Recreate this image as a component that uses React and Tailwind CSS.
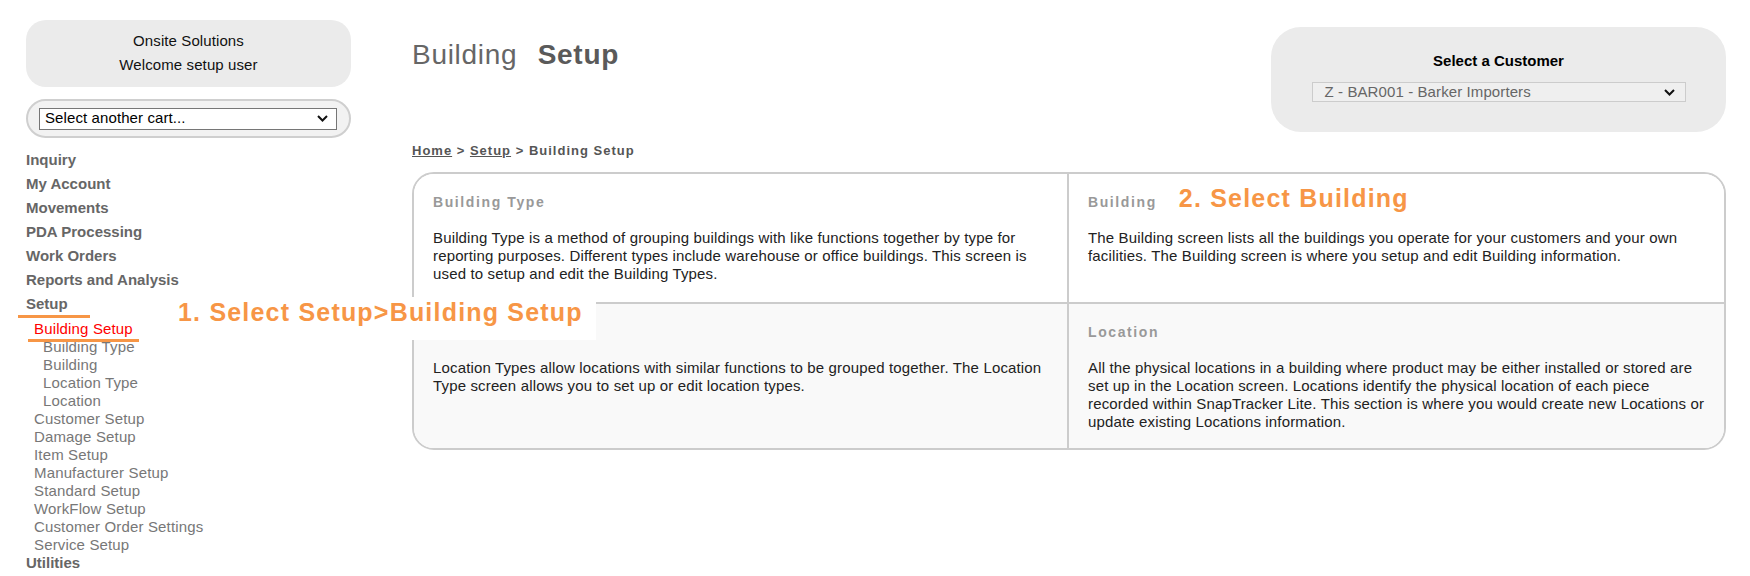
import React from 'react';

const navTop = ['Inquiry', 'My Account', 'Movements', 'PDA Processing', 'Work Orders', 'Reports and Analysis'];
const buildingItems = ['Building Type', 'Building', 'Location Type', 'Location'];
const setupItems = [
  'Customer Setup',
  'Damage Setup',
  'Item Setup',
  'Manufacturer Setup',
  'Standard Setup',
  'WorkFlow Setup',
  'Customer Order Settings',
  'Service Setup',
];

const cards = [
  {
    title: 'Building Type',
    text: 'Building Type is a method of grouping buildings with like functions together by type for reporting purposes. Different types include warehouse or office buildings. This screen is used to setup and edit the Building Types.',
  },
  {
    title: 'Building',
    note: '2. Select Building',
    text: 'The Building screen lists all the buildings you operate for your customers and your own facilities. The Building screen is where you setup and edit Building information.',
  },
  {
    title: 'Location Type',
    text: 'Location Types allow locations with similar functions to be grouped together. The Location Type screen allows you to set up or edit location types.',
  },
  {
    title: 'Location',
    text: 'All the physical locations in a building where product may be either installed or stored are set up in the Location screen. Locations identify the physical location of each piece recorded within SnapTracker Lite. This section is where you would create new Locations or update existing Locations information.',
  },
];

const Chevron = () => (
  <svg width="11" height="7" viewBox="0 0 11 7" className="shrink-0">
    <path d="M1 1l4.5 4.5L10 1" fill="none" stroke="#111" strokeWidth="2" />
  </svg>
);

const Sidebar = () => (
  <div className="w-[412px] shrink-0 pl-[26px] pt-[20px]">
    <div className="w-[325px] h-[67px] rounded-[20px] bg-[#ebebeb] pt-[9px] text-center text-[15px] leading-[24px] tracking-[0.1px] text-[#111]">
      <div>Onsite Solutions</div>
      <div>Welcome setup user</div>
    </div>

    <div className="mt-[12px] w-[325px] h-[39px] rounded-full border-2 border-[#cfcfcf] bg-[#f2f2f2] flex items-center pl-[11px] pr-[12px]">
      <div className="flex-1 h-[22px] border border-[#767676] bg-white flex items-center justify-between pl-[5px] pr-[8px] text-[15px] tracking-[0.1px] text-black">
        <span>Select another cart...</span>
        <Chevron />
      </div>
    </div>

    <ul className="mt-[10px]">
      {navTop.map((item) => (
        <li key={item} className="py-[3px] text-[15px] leading-[18px] font-bold text-[#666]">
          {item}
        </li>
      ))}
      <li className="py-[3px] text-[15px] leading-[18px] font-bold text-[#666]">Setup</li>
      <li className="mt-[4px] text-[15px] leading-[18px] tracking-[0.15px] text-[#777]">
        <div className="pl-[8px] text-[#ff0000]">Building Setup</div>
        {buildingItems.map((item) => (
          <div key={item} className="pl-[17px]">
            {item}
          </div>
        ))}
        {setupItems.map((item) => (
          <div key={item} className="pl-[8px]">
            {item}
          </div>
        ))}
      </li>
      <li className="pb-[3px] text-[15px] leading-[18px] font-bold text-[#666]">Utilities</li>
    </ul>
  </div>
);

const Card = ({ card, shaded, left, top }) => (
  <div
    className={`px-[19px] pt-[19px] ${shaded ? 'bg-[#f9f9f9]' : 'bg-white'} ${left ? 'border-r-2 border-[#cccccc]' : ''} ${
      top ? 'border-b-2 border-[#cccccc]' : ''
    }`}
  >
    <div className="h-[18px] text-[14px] leading-[18px] font-bold tracking-[1.6px] text-[#999]">
      {card.title}
      {card.note && (
        <span className="ml-[22px] text-[25px] leading-[0] tracking-[1.2px] text-[#f79646]">{card.note}</span>
      )}
    </div>
    <p className="mt-[18px] text-[15px] leading-[18px] tracking-[0.15px] text-[#222]">{card.text}</p>
  </div>
);

export default function App() {
  return (
    <div className="relative w-full min-h-[576px] bg-white font-['Liberation_Sans',Arial,sans-serif] flex">
      <Sidebar />

      <div className="flex-1 pr-[24px]">
        <div className="flex justify-between items-start">
          <h1 className="mt-[39px] text-[28px] leading-[32px] tracking-[0.7px] text-[#666]">
            <span>Building</span>
            <span className="ml-[12px] font-bold text-[#5a5a5a]"> Setup</span>
          </h1>

          <div className="mt-[27px] w-[455px] h-[105px] rounded-[30px] bg-[#ebebeb] pt-[25px] flex flex-col items-center">
            <div className="text-[15px] leading-[18px] font-bold text-black">Select a Customer</div>
            <div className="mt-[12px] w-[374px] h-[20px] border border-[#cccccc] bg-[#efefef] flex items-center justify-between pl-[12px] pr-[10px] text-[15px] tracking-[0.1px] text-[#666]">
              <span>Z - BAR001 - Barker Importers</span>
              <Chevron />
            </div>
          </div>
        </div>

        <div className="mt-[11px] text-[13px] leading-[16px] font-bold tracking-[1px] text-[#555]">
          <a className="underline">Home</a> &gt; <a className="underline">Setup</a> &gt; Building Setup
        </div>

        <div className="mt-[13px] border-2 border-[#cccccc] rounded-[22px] overflow-hidden grid grid-cols-2 grid-rows-[130px_144px]">
          {cards.map((card, i) => (
            <Card key={card.title} card={card} shaded={i > 1} left={i % 2 === 0} top={i < 2} />
          ))}
        </div>
      </div>

      {/* tutorial overlays */}
      <div className="absolute left-[18px] top-[315px] w-[72px] h-[3px] bg-[#f79646]" />
      <div className="absolute left-[28px] top-[339px] w-[111px] h-[3px] bg-[#f79646]" />
      <div className="absolute left-[166px] top-[297px] w-[430px] h-[43px] bg-white pl-[12px] pt-[1px] text-[25px] leading-[28px] font-bold tracking-[1.2px] text-[#f79646]">
        1. Select Setup&gt;Building Setup
      </div>
    </div>
  );
}
